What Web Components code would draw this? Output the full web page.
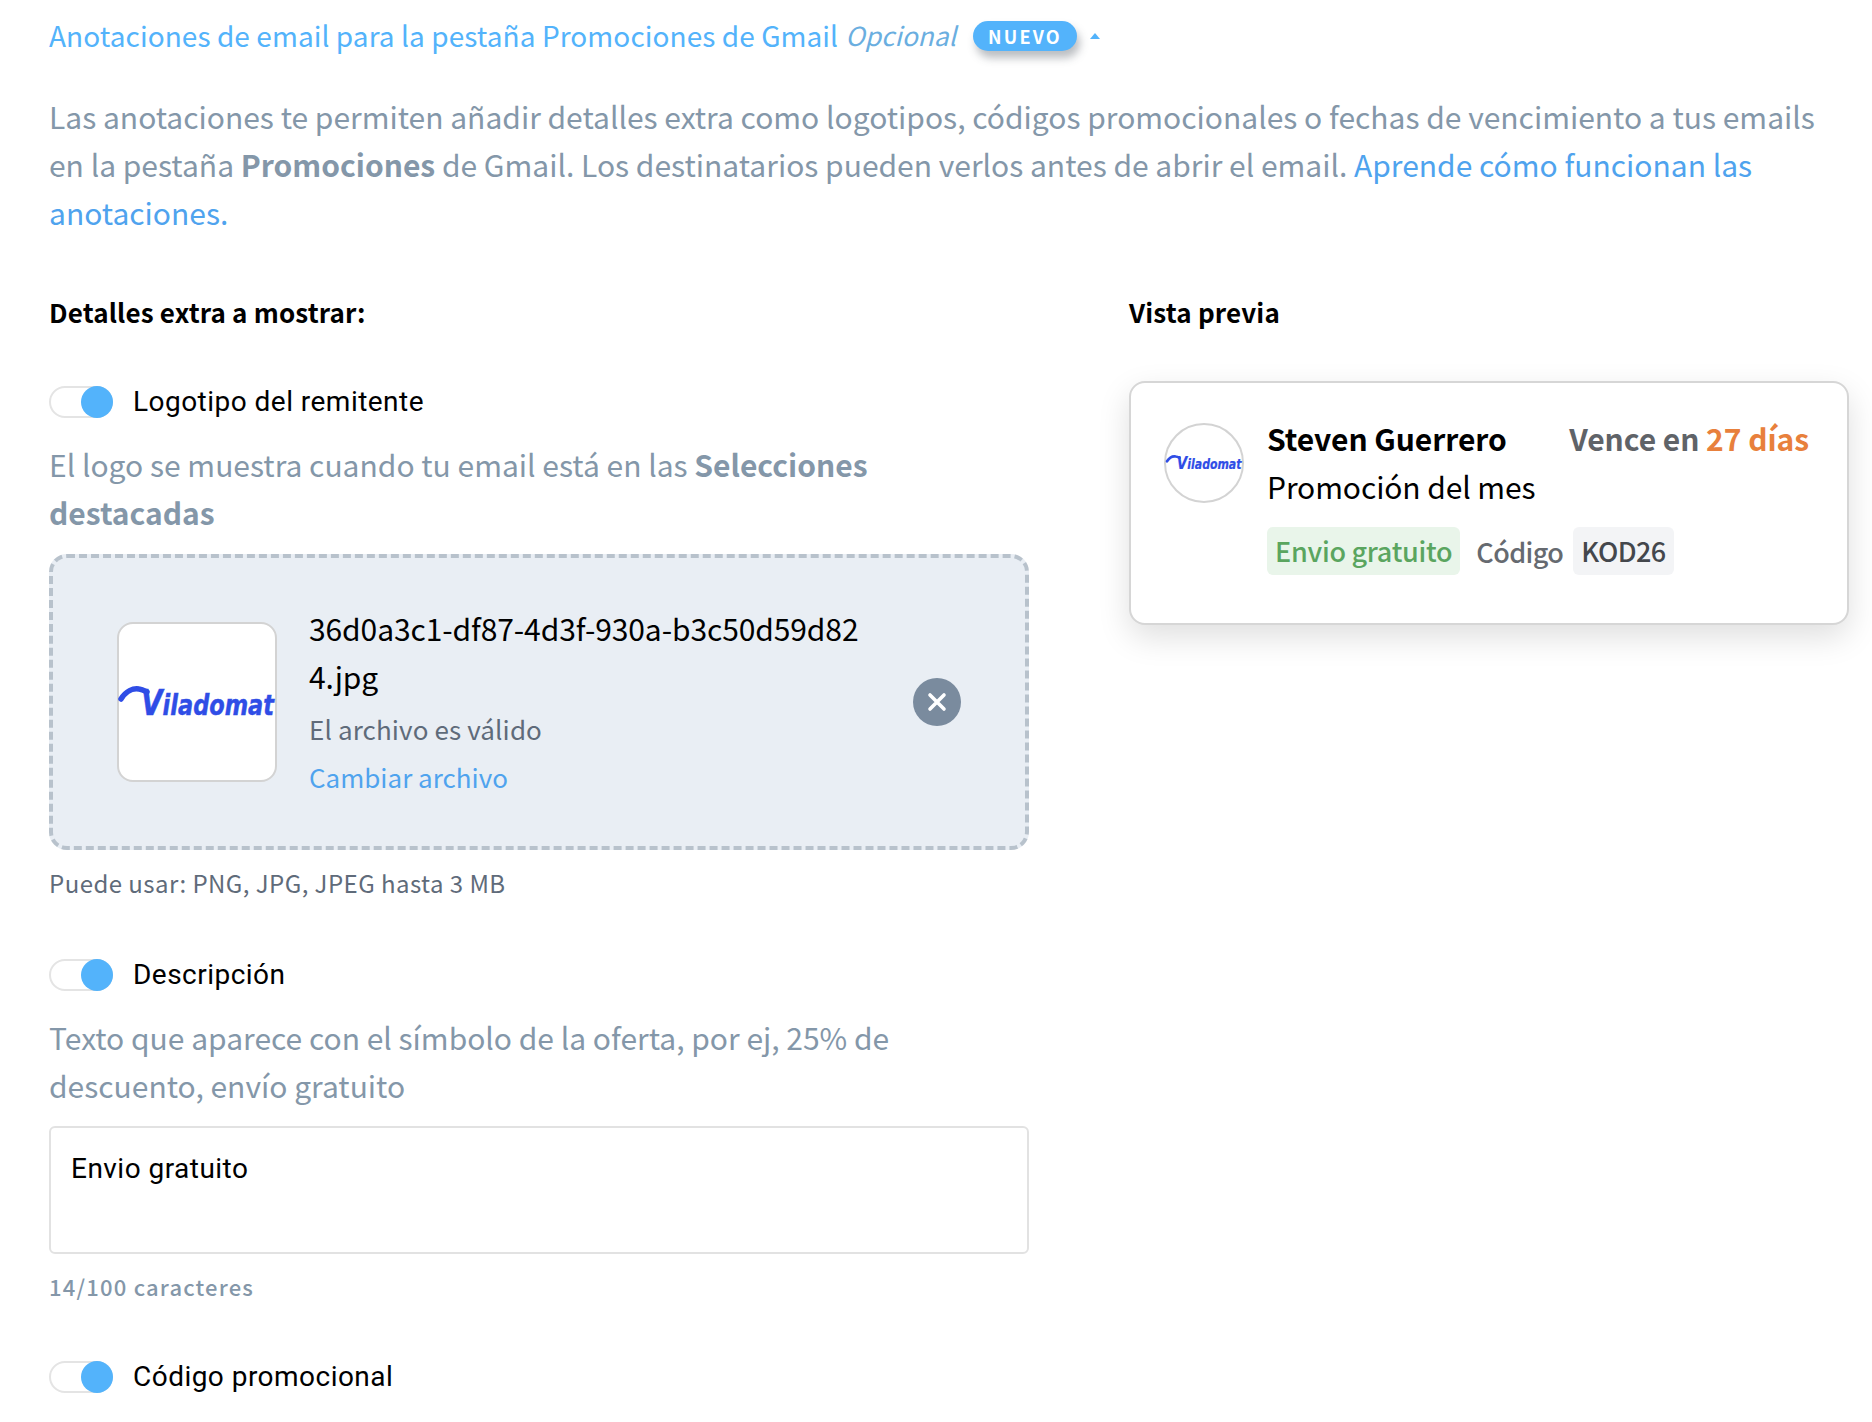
<!DOCTYPE html>
<html lang="es">
<head>
<meta charset="utf-8">
<title>Anotaciones</title>
<style>
  html, body { margin: 0; background: #fff; }
  body { font-family: "Noto Sans CJK SC", "Noto Sans", sans-serif; color: #000; height: 1422px; overflow: hidden; }
</style>
</head>
<body>
<annotation-page></annotation-page>
<script>
const SANS = '"Noto Sans CJK SC", "Noto Sans", sans-serif';

class ViladomatLogo extends HTMLElement {
  constructor() {
    super();
    this.attachShadow({ mode: 'open' });
  }
  connectedCallback() {
    this.shadowRoot.innerHTML = `
      <style>
        :host { display: block; line-height: 0; }
        svg { width: 100%; height: auto; display: block; overflow: visible; }
        text { font-family: "DejaVu Sans", sans-serif; font-weight: 700; font-style: italic; fill: #2f4de6; stroke: #2f4de6; stroke-width: .5px; }
      </style>
      <svg viewBox="0 0 156 32">
        <path d="M2 13 C7 5 14 2 20 3 C24 3.5 26 5 28 6" fill="none" stroke="#2f4de6" stroke-width="5.5" stroke-linecap="round"/>
        <text x="22" y="29" font-size="29" textLength="133" lengthAdjust="spacingAndGlyphs"><tspan font-size="36">V</tspan>iladomat</text>
      </svg>`;
  }
}

class ToggleRow extends HTMLElement {
  constructor() {
    super();
    this.attachShadow({ mode: 'open' });
  }
  connectedCallback() {
    this.shadowRoot.innerHTML = `
      <style>
        :host { display: flex; align-items: center; height: 32px; gap: 20px; font: 400 28px/32px Roboto, sans-serif; color: #000; letter-spacing: .47px; }
        .track { position: relative; width: 64px; height: 32px; box-sizing: border-box; border: 2px solid #e4e4e4; border-radius: 16px; background: #fff; flex: none; }
        .knob { position: absolute; right: -2px; top: -2px; width: 32px; height: 32px; border-radius: 50%; background: #53b3fb; }
      </style>
      <span class="track"><span class="knob"></span></span>
      <slot></slot>`;
  }
}

class HelpText extends HTMLElement {
  constructor() {
    super();
    this.attachShadow({ mode: 'open' });
  }
  connectedCallback() {
    this.shadowRoot.innerHTML = `
      <style>
        :host { display: block; width: 900px; font: 400 30px/48px ${SANS}; color: #8497a9; letter-spacing: 0; }
      </style>
      <slot></slot>`;
  }
}

class UploadBox extends HTMLElement {
  constructor() {
    super();
    this.attachShadow({ mode: 'open' });
  }
  connectedCallback() {
    this.shadowRoot.innerHTML = `
      <style>
        :host { display: flex; align-items: center; box-sizing: border-box; width: 980px; height: 296px; padding-left: 64px; background: #e9eef4; border: 4px dashed #b8c2cc; border-radius: 18px; font-family: ${SANS}; }
        .thumb { width: 160px; height: 160px; box-sizing: border-box; flex: none; background: #fff; border: 2px solid #d3d3d3; border-radius: 16px; display: flex; align-items: center; justify-content: center; }
        viladomat-logo { width: 156px; }
        .info { margin-left: 32px; width: 560px; }
        .name { font-size: 30px; line-height: 48px; color: #000; letter-spacing: -.1px; }
        .valid { font-size: 26px; line-height: 48px; margin-top: 5px; color: #5f6b7a; letter-spacing: .12px; }
        .change { font-size: 26px; line-height: 48px; color: #4fa3ee; letter-spacing: 0; }
        .remove { width: 48px; height: 48px; border-radius: 50%; background: #7a8b9e; flex: none; margin-left: 44px; display: flex; align-items: center; justify-content: center; }
      </style>
      <div class="thumb"><viladomat-logo></viladomat-logo></div>
      <div class="info">
        <div class="name">36d0a3c1-df87-4d3f-930a-b3c50d59d82<br>4.jpg</div>
        <div class="valid">El archivo es válido</div>
        <div class="change">Cambiar archivo</div>
      </div>
      <div class="remove">
        <svg width="20" height="20" viewBox="0 0 20 20"><path d="M3 3 L17 17 M17 3 L3 17" stroke="#fff" stroke-width="3.6" stroke-linecap="round"/></svg>
      </div>`;
  }
}

class PreviewCard extends HTMLElement {
  constructor() {
    super();
    this.attachShadow({ mode: 'open' });
  }
  connectedCallback() {
    this.shadowRoot.innerHTML = `
      <style>
        :host { display: flex; box-sizing: border-box; width: 720px; height: 244px; padding: 40px 38px 0 33px; background: #fff; border: 2px solid #d6d6d6; border-radius: 16px; box-shadow: 0 12px 32px rgba(0,0,0,.13); font-family: ${SANS}; }
        .avatar { width: 80px; height: 80px; box-sizing: border-box; flex: none; border: 2px solid #d3d3d3; border-radius: 50%; display: flex; align-items: center; justify-content: center; background: #fff; }
        viladomat-logo { width: 76px; }
        .body { margin-left: 23px; margin-top: -9px; flex: 1; }
        .top { display: flex; justify-content: space-between; line-height: 48px; font-size: 30px; font-weight: 700; letter-spacing: -.05px; }
        .due { color: #5f6368; }
        .due b { color: #e8803c; font-weight: 700; }
        .sub { font-size: 30px; line-height: 48px; letter-spacing: -.1px; }
        .chips { display: flex; align-items: center; margin-top: 17px; font-size: 27px; font-weight: 500; letter-spacing: -.28px; }
        .chip { height: 48px; line-height: 48px; padding: 0 8px; border-radius: 6px; }
        .green { background: #e9f5ea; color: #5aa55f; }
        .label { color: #666a70; margin: 0 10px 0 16px; letter-spacing: -.6px; }
        .code { background: #f3f4f6; color: #44474c; letter-spacing: -.6px; }
      </style>
      <div class="avatar"><viladomat-logo></viladomat-logo></div>
      <div class="body">
        <div class="top"><span>Steven Guerrero</span><span class="due">Vence en <b>27 días</b></span></div>
        <div class="sub">Promoción del mes</div>
        <div class="chips"><span class="chip green">Envio gratuito</span><span class="label">Código</span><span class="chip code">KOD26</span></div>
      </div>`;
  }
}

class AnnotationPage extends HTMLElement {
  constructor() {
    super();
    this.attachShadow({ mode: 'open' });
  }
  connectedCallback() {
    this.shadowRoot.innerHTML = `
      <style>
        :host { display: block; box-sizing: border-box; padding: 18px 24px 0 49px; font-family: ${SANS}; }
        .title { display: flex; align-items: center; height: 36px; font-size: 28px; color: #53b3fb; letter-spacing: .07px; white-space: nowrap; }
        .title span:first-child, .title i { padding-bottom: 2px; }
        .title i { margin-left: 7px; font-size: 26.2px; color: #6aaee0; }
        .badge { margin-left: 17px; width: 104px; height: 30px; border-radius: 15px; background: #53b3fb; color: #fff; font: 700 18px/30px ${SANS}; letter-spacing: 2.2px; text-align: center; box-shadow: 3px 7px 8px rgba(60,70,80,.35); }
        .arrow { margin-left: 13px; width: 0; height: 0; border: 5.5px solid transparent; border-top: 0; border-bottom: 6px solid #53b3fb; }
        .intro { margin-top: 38px; margin-right: 20px; font-size: 30px; line-height: 48px; color: #8497a9; letter-spacing: 0; }
        .intro a { color: #4fa3ee; text-decoration: none; }
        .cols { display: grid; grid-template-columns: 980px 720px; column-gap: 100px; margin-top: 53px; }
        h2 { margin: 0; font-size: 26px; line-height: 46px; padding-bottom: 2px; font-weight: 700; letter-spacing: .17px; color: #000; }
        .right h2 { margin-bottom: 44px; }
        .left toggle-row { margin-top: 49px; }
        .left help-text { margin-top: 22px; }
        upload-box { margin-top: 18px; }
        .hint { margin-top: 15px; font-size: 24px; line-height: 36px; color: #5f6b7a; letter-spacing: .45px; }
        .left toggle-row.second { margin-top: 58px; }
        .left toggle-row.third { margin-top: 58px; }
        .input { box-sizing: border-box; margin-top: 17px; height: 128px; border: 2px solid #e2e2e2; border-radius: 6px; padding: 23px 20px 0; font: 400 28px/36px Roboto, sans-serif; color: #000; letter-spacing: .47px; }
        .count { margin-top: 15px; font-size: 22px; line-height: 34px; font-weight: 500; color: #8497a9; letter-spacing: 1.2px; }
      </style>
      <div class="title">
        <span>Anotaciones de email para la pestaña Promociones de Gmail</span><i>Opcional</i>
        <span class="badge">NUEVO</span><span class="arrow"></span>
      </div>
      <div class="intro">Las anotaciones te permiten añadir detalles extra como logotipos, códigos promocionales o fechas de vencimiento a tus emails en la pestaña <b>Promociones</b> de Gmail. Los destinatarios pueden verlos antes de abrir el email. <a>Aprende cómo funcionan las anotaciones.</a></div>
      <div class="cols">
        <div class="left">
          <h2>Detalles extra a mostrar:</h2>
          <toggle-row>Logotipo del remitente</toggle-row>
          <help-text>El logo se muestra cuando tu email está en las <b>Selecciones destacadas</b></help-text>
          <upload-box></upload-box>
          <div class="hint">Puede usar: PNG, JPG, JPEG hasta 3 MB</div>
          <toggle-row class="second">Descripción</toggle-row>
          <help-text>Texto que aparece con el símbolo de la oferta, por ej, 25% de descuento, envío gratuito</help-text>
          <div class="input">Envio gratuito</div>
          <div class="count">14/100 caracteres</div>
          <toggle-row class="third">Código promocional</toggle-row>
        </div>
        <div class="right">
          <h2>Vista previa</h2>
          <preview-card></preview-card>
        </div>
      </div>`;
  }
}

customElements.define('viladomat-logo', ViladomatLogo);
customElements.define('toggle-row', ToggleRow);
customElements.define('help-text', HelpText);
customElements.define('upload-box', UploadBox);
customElements.define('preview-card', PreviewCard);
customElements.define('annotation-page', AnnotationPage);
</script>
</body>
</html>
